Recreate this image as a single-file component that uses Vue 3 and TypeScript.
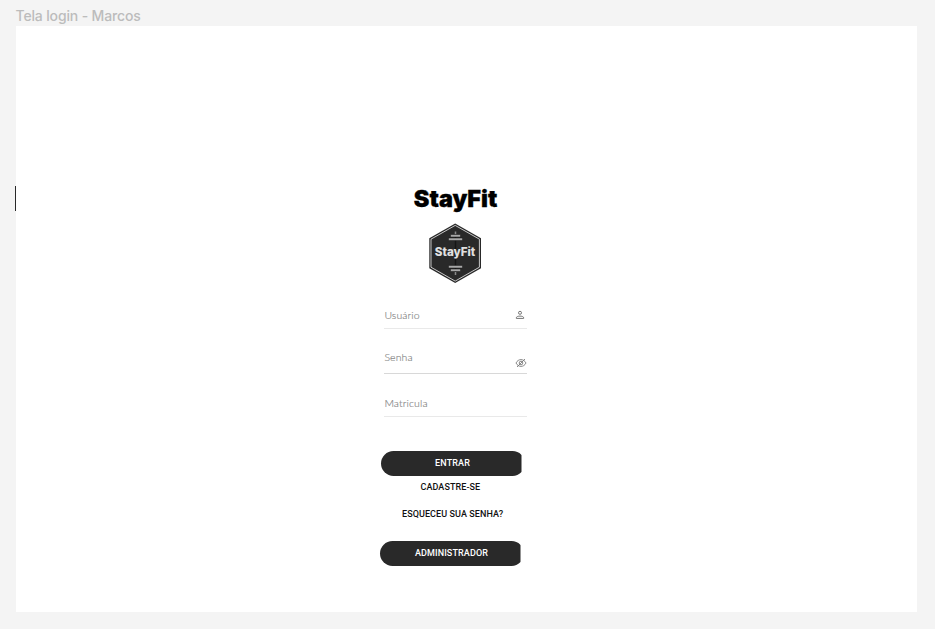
<script setup lang="ts">
interface Field {
  id: string
  label: string
  icon?: 'user' | 'eye'
}

const fields: Field[] = [
  { id: 'usuario', label: 'Usuário', icon: 'user' },
  { id: 'senha', label: 'Senha', icon: 'eye' },
  { id: 'matricula', label: 'Matricula' },
]
</script>

<template>
  <div class="canvas">
    <div class="frame-label">Tela login - Marcos</div>
    <main class="frame">
      <span class="marker"></span>
      <section class="login">
        <svg class="title" width="90" height="32" viewBox="0 0 90 32">
          <text x="3.8" y="21" textLength="83.5" lengthAdjust="spacingAndGlyphs">StayFit</text>
        </svg>
        <svg class="badge" width="54" height="62" viewBox="0 0 54 62">
          <path d="M27.2 0.5 53 15.2V45.2L27.2 60 1.3 45.2V15.2Z" fill="#292929" />
          <path d="M27.2 2.4 51.4 16.2V44.2L27.2 58.1 3 44.2V16.2Z" fill="none" stroke="#d8d8d8" stroke-width=".9" />
          <path d="M27.5 9V52" stroke="#151515" stroke-width="1.4" />
          <path d="M26.7 8.5h1.6v3h-1.6zM26.7 49h1.6v3h-1.6z" fill="#888" />
          <path d="M22.5 11.5h10v2.5h-10zM20.5 15h14v2.6h-14zM20.5 42.4h14v2.6h-14zM22.5 46h10v2.5h-10z" fill="#a8a8a8" stroke="#171717" stroke-width=".5" />
          <text x="6.8" y="33" textLength="40.5" lengthAdjust="spacingAndGlyphs">StayFit</text>
        </svg>
        <div v-for="field in fields" :key="field.id" class="field" :class="field.id">
          <span class="placeholder">{{ field.label }}</span>
          <svg v-if="field.icon === 'user'" class="icon" width="10" height="10" viewBox="0 0 10 10">
            <circle cx="5" cy="2.8" r="1.5" />
            <path d="M1.3 8.4V7.8C1.3 6.5 3.5 6.1 5 6.1S8.7 6.5 8.7 7.8V8.4Z" />
          </svg>
          <svg v-else-if="field.icon === 'eye'" class="icon" width="12" height="10" viewBox="0 0 12 10">
            <path d="M1 5C2.2 2.7 4 1.6 6 1.6S9.8 2.7 11 5C9.8 7.3 8 8.4 6 8.4S2.2 7.3 1 5Z" />
            <circle cx="6" cy="5" r="1.8" />
            <path d="M2 9 10 1" />
          </svg>
        </div>
        <button class="pill enter" type="button">ENTRAR</button>
        <a class="link signup">CADASTRE-SE</a>
        <a class="link forgot">ESQUECEU SUA SENHA?</a>
        <button class="pill admin" type="button">ADMINISTRADOR</button>
      </section>
    </main>
  </div>
</template>

<style>
body {
  margin: 0;
  background: #f4f4f4;
}
</style>

<style scoped>
.canvas {
  box-sizing: border-box;
  width: 935px;
  height: 629px;
  padding: 6px 18px 17px 16px;
  overflow: hidden;
  background: #f4f4f4;
  font-family: Roboto, 'Liberation Sans', sans-serif;
}
.frame-label {
  height: 20px;
  margin-left: -0.5px;
  color: #bcbcbc;
  font: 500 14px/20px Inter, sans-serif;
  letter-spacing: -0.15px;
  white-space: nowrap;
}
.frame {
  position: relative;
  height: 586px;
  background: #fff;
}
.marker {
  position: absolute;
  left: -1px;
  top: 160px;
  width: 1px;
  height: 25px;
  background: #292929;
}
.login {
  display: flex;
  flex-direction: column;
  width: 150px;
  margin-left: 364px;
  padding-top: 160px;
}
.title {
  display: block;
  flex: none;
  margin-left: 30px;
}
.title text {
  font: 900 22.5px Inter, sans-serif;
  fill: #000;
  stroke: #000;
  stroke-width: 0.3px;
}
.badge {
  display: block;
  flex: none;
  margin: 5px 0 0 48px;
}
.badge text {
  font: 800 11.5px Inter, sans-serif;
  fill: #e0e0e0;
}
.field {
  display: flex;
  box-sizing: border-box;
  justify-content: space-between;
  width: 143px;
  margin-left: 4px;
  border-bottom: 1px solid #e9e9e9;
  color: #858585;
}
.usuario {
  height: 24px;
  margin-top: 20px;
}
.senha {
  height: 28px;
  margin-top: 17px;
  border-color: #d8d8d8;
}
.matricula {
  height: 23px;
  margin-top: 20px;
}
.placeholder {
  font: 300 10.5px/14px Lato, sans-serif;
  letter-spacing: 0.12px;
  padding: 3px 0 0 0.4px;
  -webkit-text-stroke: 0.15px #858585;
}
.senha .placeholder {
  padding-top: 4px;
}
.matricula .placeholder {
  padding-top: 2px;
}
.icon {
  margin: 5px 1.6px 0 0;
  fill: none;
  stroke: #757575;
  stroke-width: 1;
}
.senha .icon {
  margin-top: 12px;
  margin-right: 0.5px;
  stroke-width: 0.85;
}
.pill {
  width: 144px;
  height: 25px;
  padding: 0;
  border: 0;
  border-radius: 13px;
  background: #292929;
  clip-path: inset(0 3px 0 0);
  color: #fff;
  font: 500 9px/25px Roboto, sans-serif;
  letter-spacing: 0.12px;
}
.enter {
  margin: 34px 0 0 0.5px;
}
.admin {
  margin: 21px 0 0 -0.5px;
}
.link {
  color: #111;
  font: 500 9px/12px Roboto, sans-serif;
  letter-spacing: 0.08px;
  white-space: nowrap;
}
.signup {
  margin: 5px 0 0 40.5px;
}
.forgot {
  margin: 15px 0 0 22px;
}
</style>
